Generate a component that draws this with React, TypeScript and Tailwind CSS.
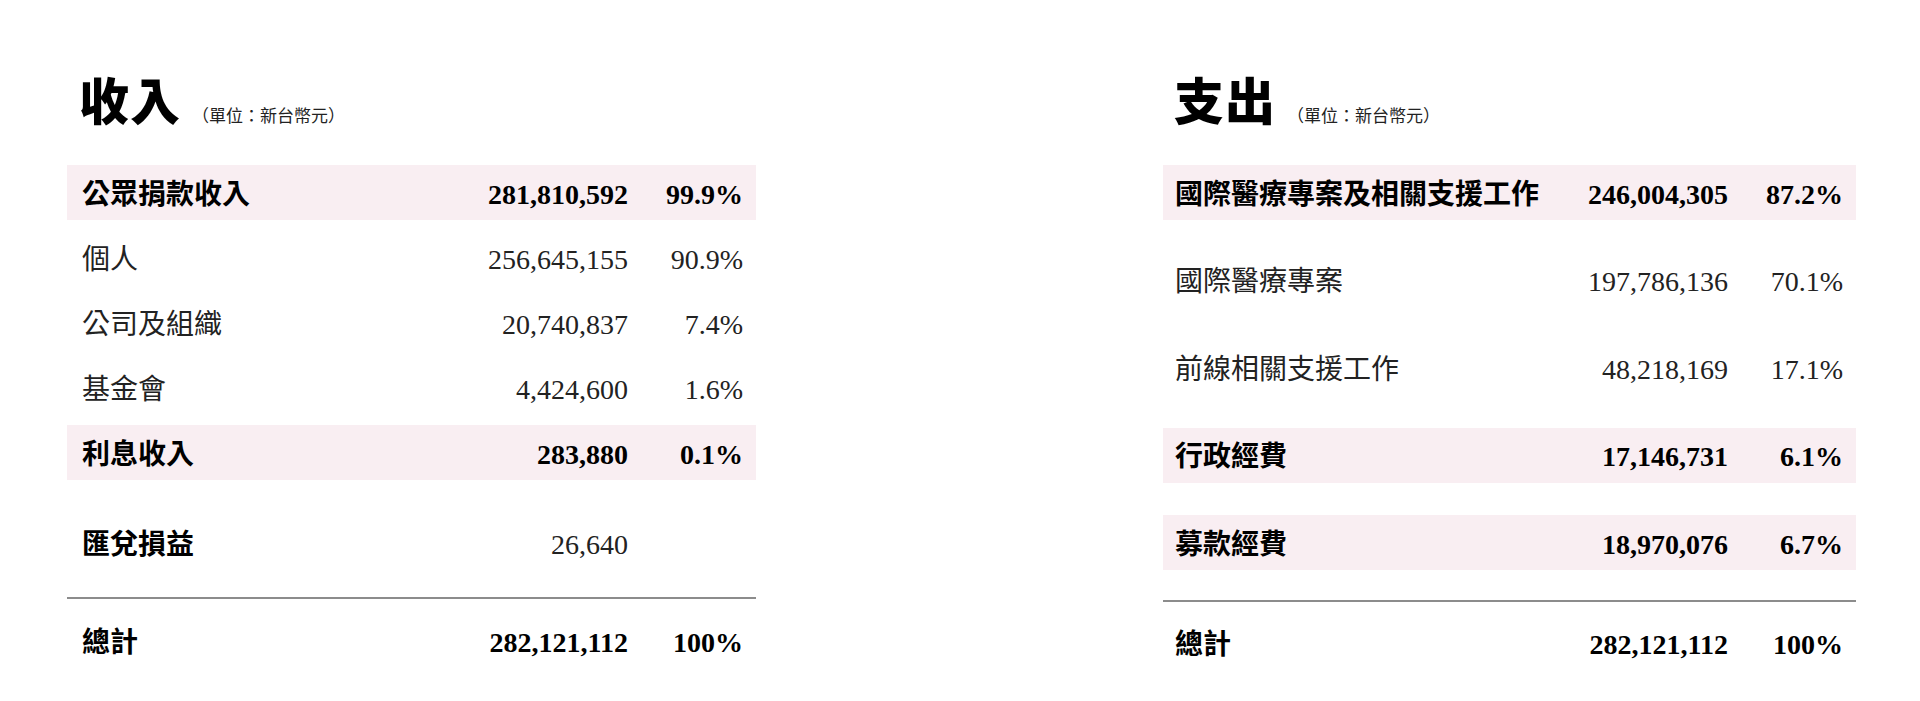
const FONT = { fontFamily: '"Liberation Serif", "Noto Sans CJK TC", serif' }

type Row = {
  label: string
  amount: string
  pct?: string
  shade?: boolean
  boldLabel?: boolean
  boldNum?: boolean
  mt: string
}

const income: Row[] = [
  { label: '公眾捐款收入', amount: '281,810,592', pct: '99.9%', shade: true, boldLabel: true, boldNum: true, mt: 'mt-0' },
  { label: '個人', amount: '256,645,155', pct: '90.9%', mt: 'mt-[10px]' },
  { label: '公司及組織', amount: '20,740,837', pct: '7.4%', mt: 'mt-[10px]' },
  { label: '基金會', amount: '4,424,600', pct: '1.6%', mt: 'mt-[10px]' },
  { label: '利息收入', amount: '283,880', pct: '0.1%', shade: true, boldLabel: true, boldNum: true, mt: 'mt-[10px]' },
  { label: '匯兌損益', amount: '26,640', boldLabel: true, mt: 'mt-[35px]' },
]

const expense: Row[] = [
  { label: '國際醫療專案及相關支援工作', amount: '246,004,305', pct: '87.2%', shade: true, boldLabel: true, boldNum: true, mt: 'mt-0' },
  { label: '國際醫療專案', amount: '197,786,136', pct: '70.1%', mt: 'mt-[32.5px]' },
  { label: '前線相關支援工作', amount: '48,218,169', pct: '17.1%', mt: 'mt-[32.5px]' },
  { label: '行政經費', amount: '17,146,731', pct: '6.1%', shade: true, boldLabel: true, boldNum: true, mt: 'mt-[32.5px]' },
  { label: '募款經費', amount: '18,970,076', pct: '6.7%', shade: true, boldLabel: true, boldNum: true, mt: 'mt-[32.5px]' },
]

function TableRow({ row, padLeft }: { row: Row; padLeft: string }) {
  return (
    <div
      className={`flex items-center h-[55px] ${padLeft} pr-[13px] pt-[4px] text-[28px] leading-none ${row.mt} ${
        row.shade ? 'bg-[#f9eef2]' : ''
      }`}
    >
      <div className={`flex-1 ${row.boldLabel ? 'font-bold text-black' : 'text-[#222]'}`}>{row.label}</div>
      <div className={`text-right ${row.boldNum ? 'font-bold text-black' : 'text-[#222]'}`}>{row.amount}</div>
      <div className={`w-[115px] text-right ${row.boldNum ? 'font-bold text-black' : 'text-[#222]'}`}>
        {row.pct ?? ''}
      </div>
    </div>
  )
}

function Panel({
  title,
  rows,
  width,
  padLeft,
  titleLeft,
  lineGap,
  totalGap,
}: {
  title: string
  rows: Row[]
  width: string
  padLeft: string
  titleLeft: string
  lineGap: string
  totalGap: string
}) {
  return (
    <div className={`${width} pt-[78px]`}>
      {/* Heading */}
      <div className={`flex items-end h-[50px] ${titleLeft}`}>
        <h2 className="text-[50px] font-black leading-none text-black tracking-[1px]">{title}</h2>
        <span className="ml-[11px] mb-[3px] text-[17px] leading-none text-[#222]">（單位：新台幣元）</span>
      </div>

      {/* Rows */}
      <div className="mt-[37px]">
        {rows.map((r) => (
          <TableRow key={r.label} row={r} padLeft={padLeft} />
        ))}
      </div>

      {/* Divider */}
      <div className={`${lineGap} border-t-2 border-[#8c8c8c]`} />

      {/* Total */}
      <div
        className={`flex items-center h-[55px] ${padLeft} pr-[13px] pt-[4px] text-[28px] leading-none font-bold text-black ${totalGap}`}
      >
        <div className="flex-1">總計</div>
        <div className="text-right">282,121,112</div>
        <div className="w-[115px] text-right">100%</div>
      </div>
    </div>
  )
}

export default function App() {
  return (
    <div className="w-[1920px] h-[701px] bg-white overflow-hidden" style={FONT}>
      <div className="flex justify-between pl-[67px] pr-[64px]">
        <Panel
          title="收入"
          rows={income}
          width="w-[689px]"
          padLeft="pl-[15px]"
          titleLeft="pl-[12px]"
          lineGap="mt-[27px]"
          totalGap="mt-[14px]"
        />
        <Panel
          title="支出"
          rows={expense}
          width="w-[693px]"
          padLeft="pl-[12px]"
          titleLeft="pl-[11px]"
          lineGap="mt-[30px]"
          totalGap="mt-[13px]"
        />
      </div>
    </div>
  )
}
